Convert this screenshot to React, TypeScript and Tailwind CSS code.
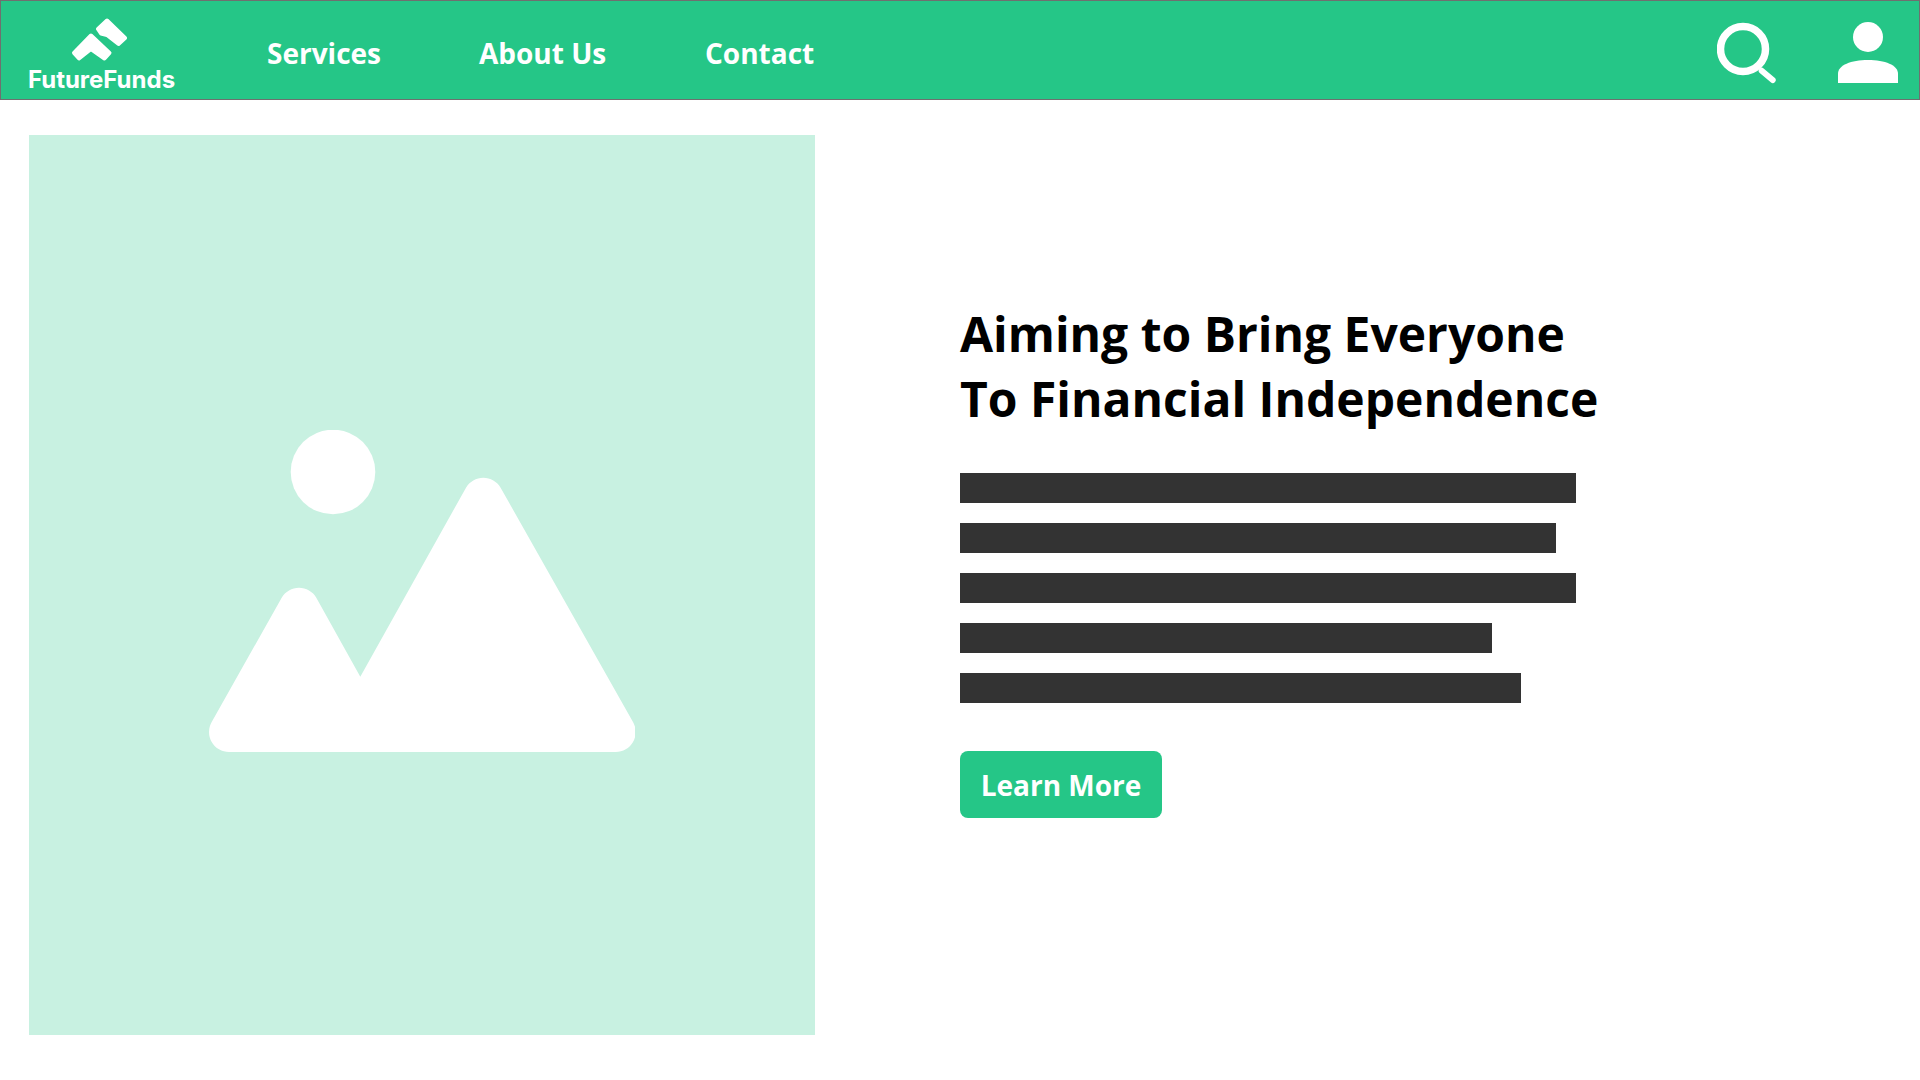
const bars = [616, 596, 616, 532, 561]

function Logo() {
  return (
    <svg className="-ml-[5px]" width="56" height="46" viewBox="72 17 56 46" fill="#fff" stroke="#fff" strokeWidth="4" strokeLinejoin="round">
      <path d="M92 35.5 L110.5 53 L105.5 58.5 L92 49 L80 58.5 L75 53 Z" />
      <path d="M108 20.5 L126 38 L119.5 44 L108 35 L102 33.5 L99 29 Z" />
    </svg>
  )
}

export default function App() {
  return (
    <div className="w-[1920px] h-[1080px] bg-white overflow-hidden font-['Open_Sans',sans-serif]">
      {/* Top bar */}
      <header className="h-[100px] flex items-center bg-[#25c687] border border-[#6f6f6f] text-white pl-[26px] pr-[21px]">
        <div className="w-[149px] shrink-0 flex flex-col items-center mt-[9px]">
          <Logo />
          <span className="mt-[4px] font-['Inter',sans-serif] font-bold text-[24px] leading-[26px]">FutureFunds</span>
        </div>
        <nav className="ml-[91px] flex items-center text-[28px] font-bold leading-none mt-[6px]">
          <a className="w-[212px]">Services</a>
          <a className="w-[226px]">About Us</a>
          <a>Contact</a>
        </nav>
        <div className="ml-auto flex items-center gap-[61px] mt-[6px]">
          <svg width="60" height="62" viewBox="0 0 60 62" fill="none" stroke="#fff" strokeLinecap="round">
            <circle cx="26" cy="27" r="22.5" strokeWidth="7.5" />
            <path d="M44.7 48.7 L55.7 58" strokeWidth="6" />
          </svg>
          <svg width="60" height="62" viewBox="0 0 60 62" fill="#fff">
            <circle cx="30" cy="15" r="15" />
            <path d="M0 61 V52 C0 43 13 38 30 38 C47 38 60 43 60 52 V61 Z" />
          </svg>
        </div>
      </header>

      <main className="flex pl-[29px] pt-[35px]">
        {/* Image placeholder */}
        <div className="w-[786px] h-[900px] shrink-0 bg-[#c8f1e1] flex items-center justify-center">
          <svg className="mt-[12px]" width="426" height="322" viewBox="209 430 426 322" fill="#fff">
            <circle cx="333" cy="472" r="42.3" />
            <path d="M360.3 676.7 L466 487.7 A20 20 0 0 1 500.6 487.7 L633 722 A20 20 0 0 1 615.7 752 L229 752 A20 20 0 0 1 211.7 722 L281.7 597.7 A20 20 0 0 1 316.3 597.7 Z" />
          </svg>
        </div>

        {/* Copy */}
        <section className="ml-[145px] pt-[166px]">
          <h1 className="text-[48px] leading-[65px] font-bold text-black">
            Aiming to Bring Everyone
            <br />
            To Financial Independence
          </h1>
          <div className="mt-[42px] flex flex-col gap-[20px]">
            {bars.map((w, i) => (
              <div key={i} className="h-[30px] bg-[#333333]" style={{ width: w }} />
            ))}
          </div>
          <button className="mt-[48px] w-[202px] h-[67px] rounded-[8px] bg-[#25c687] text-white text-[28px] font-bold">
            Learn More
          </button>
        </section>
      </main>
    </div>
  )
}
